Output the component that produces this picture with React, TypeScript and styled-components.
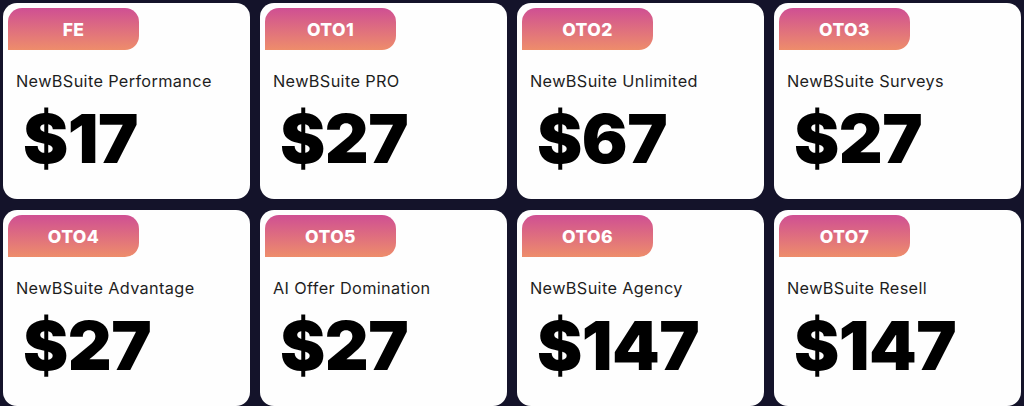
import React from 'react'
import styled, { createGlobalStyle } from 'styled-components'

type Offer = {
  tag: string
  name: string
  price: number
}

const offers: Offer[] = [
  { tag: 'FE', name: 'NewBSuite Performance', price: 17 },
  { tag: 'OTO1', name: 'NewBSuite PRO', price: 27 },
  { tag: 'OTO2', name: 'NewBSuite Unlimited', price: 67 },
  { tag: 'OTO3', name: 'NewBSuite Surveys', price: 27 },
  { tag: 'OTO4', name: 'NewBSuite Advantage', price: 27 },
  { tag: 'OTO5', name: 'AI Offer Domination', price: 27 },
  { tag: 'OTO6', name: 'NewBSuite Agency', price: 147 },
  { tag: 'OTO7', name: 'NewBSuite Resell', price: 147 },
]

const App: React.FC = () => {
  return (
    <>
      <GlobalStyle />
      <Grid>
        {offers.map((offer) => (
          <Card key={offer.tag}>
            <Badge>{offer.tag}</Badge>
            <Name>{offer.name}</Name>
            <Price>${offer.price}</Price>
          </Card>
        ))}
      </Grid>
    </>
  )
}

export default App

const GlobalStyle = createGlobalStyle`
  html, body {
    margin: 0;
    padding: 0;
    background: #14132a;
    height: 406px;
    overflow: hidden;
  }
  body {
    font-family: Inter, 'Noto Sans', sans-serif;
  }
`

const Grid = styled.div`
  display: grid;
  grid-template-columns: repeat(4, 247px);
  grid-auto-rows: 196px;
  column-gap: 10px;
  row-gap: 11px;
  padding: 3px 3px 0;
`

const Card = styled.div`
  background: #fefefe;
  border-radius: 14px;
  padding: 5px;
  display: flex;
  flex-direction: column;
  align-items: flex-start;
`

const Badge = styled.div`
  width: 131px;
  height: 42px;
  box-sizing: border-box;
  display: flex;
  align-items: center;
  justify-content: center;
  background: linear-gradient(180deg, #cf4f93 0%, #ee8d6b 100%);
  border-radius: 14px 14px 14px 0;
  color: #ffffff;
  font-family: Inter, sans-serif;
  font-weight: 800;
  font-size: 17.5px;
  letter-spacing: 0.4px;
`

const Name = styled.div`
  margin: 21px 0 0 8px;
  font-size: 16.3px;
  line-height: 20px;
  letter-spacing: 0.35px;
  color: #1e1e1e;
  font-weight: 400;
`

const Price = styled.div`
  margin: 13px 0 0 15px;
  font-size: 68px;
  line-height: 68px;
  font-weight: 900;
  color: #000000;
  letter-spacing: -0.5px;
`
